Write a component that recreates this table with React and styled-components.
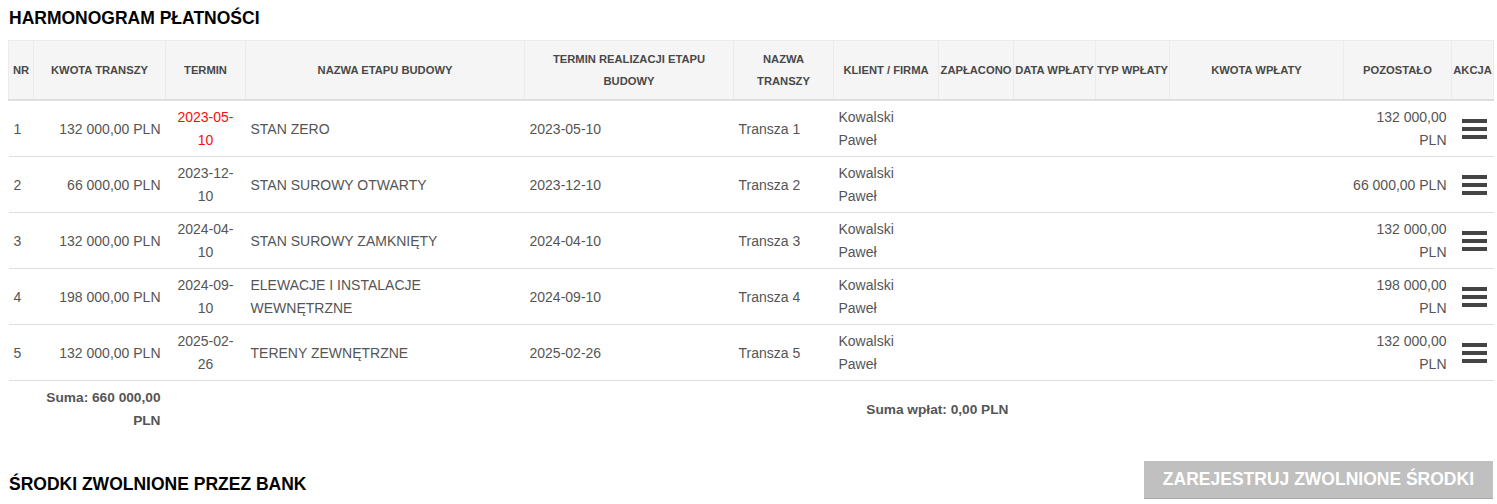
import React from "react";
import styled, { createGlobalStyle } from "styled-components";

const GlobalStyle = createGlobalStyle`
  body {
    margin: 0;
    background: #fff;
    font-family: "Liberation Sans", Arial, sans-serif;
  }
`;

const Page = styled.div`
  width: 1485px;
  padding: 8px 0 0 8px;
`;

const SectionTitle = styled.h2`
  margin: 0;
  font-size: 17.5px;
  line-height: 20px;
  font-weight: bold;
  color: #000;
  text-transform: uppercase;
  padding-left: 1px;
`;

const Schedule = styled.table`
  width: 1485px;
  margin-top: 12px;
  border-collapse: collapse;
  table-layout: fixed;
  font-size: 14px;
  color: #555;

  th {
    background: #f5f5f5;
    border: 1px solid #ebebeb;
    border-bottom: 2px solid #dedede;
    padding: 7px 1px;
    font-size: 11.2px;
    line-height: 22px;
    font-weight: bold;
    color: #484848;
    text-align: center;
    vertical-align: middle;
    white-space: nowrap;
  }

  td {
    border-top: 1px solid #dedede;
    padding: 5px 5px 4px;
    line-height: 23px;
    vertical-align: middle;
  }
`;

const Cell = styled.td`
  text-align: ${(p) => p.$align || "left"};
  color: ${(p) => (p.$late ? "#f41010" : "#555")};
`;

const SumCell = styled.td`
  text-align: right;
  font-size: 13.7px;
  font-weight: bold;
  color: #555;
`;

const MenuButton = styled.span`
  display: inline-block;
  padding-top: 6px;
  padding-left: 5px;
  cursor: pointer;

  svg {
    display: block;
  }
`;

const BankSection = styled.div`
  display: flex;
  justify-content: space-between;
  align-items: flex-end;
  margin-top: 25px;

  h2 {
    margin-bottom: 5px;
  }
`;

const RegisterButton = styled.button`
  height: 38px;
  padding: 0 19px;
  border: none;
  border-bottom: 1px solid #a9a9a9;
  background: #c0c0c0;
  color: #fff;
  font-family: "Liberation Sans", Arial, sans-serif;
  font-size: 17.5px;
  font-weight: bold;
  text-transform: uppercase;
  cursor: not-allowed;
`;

const widths = [25, 132, 80, 279, 209, 100, 105, 75, 82, 74, 174, 108, 42];

const rows = [
  { nr: 1, amount: "132 000,00 PLN", date: "2023-05-10", late: true, stage: "STAN ZERO", left: "132 000,00 PLN" },
  { nr: 2, amount: "66 000,00 PLN", date: "2023-12-10", stage: "STAN SUROWY OTWARTY", left: "66 000,00 PLN" },
  { nr: 3, amount: "132 000,00 PLN", date: "2024-04-10", stage: "STAN SUROWY ZAMKNIĘTY", left: "132 000,00 PLN" },
  { nr: 4, amount: "198 000,00 PLN", date: "2024-09-10", stage: "ELEWACJE I INSTALACJE WEWNĘTRZNE", left: "198 000,00 PLN" },
  { nr: 5, amount: "132 000,00 PLN", date: "2025-02-26", stage: "TERENY ZEWNĘTRZNE", left: "132 000,00 PLN" },
];

const BarsIcon = () => (
  <svg width="25" height="20" viewBox="0 0 25 20">
    <rect x="0" y="0" width="25" height="4" fill="#444" />
    <rect x="0" y="8" width="25" height="4" fill="#444" />
    <rect x="0" y="16" width="25" height="4" fill="#444" />
  </svg>
);

export default function App() {
  return (
    <Page>
      <GlobalStyle />
      <SectionTitle>Harmonogram płatności</SectionTitle>
      <Schedule>
        <colgroup>
          {widths.map((w, i) => (
            <col key={i} style={{ width: w }} />
          ))}
        </colgroup>
        <thead>
          <tr>
            <th>NR</th>
            <th>KWOTA TRANSZY</th>
            <th>TERMIN</th>
            <th>NAZWA ETAPU BUDOWY</th>
            <th>
              TERMIN REALIZACJI ETAPU
              <br />
              BUDOWY
            </th>
            <th>
              NAZWA
              <br />
              TRANSZY
            </th>
            <th>KLIENT / FIRMA</th>
            <th>ZAPŁACONO</th>
            <th>DATA WPŁATY</th>
            <th>TYP WPŁATY</th>
            <th>KWOTA WPŁATY</th>
            <th>POZOSTAŁO</th>
            <th>AKCJA</th>
          </tr>
        </thead>
        <tbody>
          {rows.map((r) => (
            <tr key={r.nr}>
              <Cell>{r.nr}</Cell>
              <Cell $align="right">{r.amount}</Cell>
              <Cell $align="center" $late={r.late}>
                {r.date}
              </Cell>
              <Cell>{r.stage}</Cell>
              <Cell>{r.date}</Cell>
              <Cell>Transza {r.nr}</Cell>
              <Cell>
                Kowalski
                <br />
                Paweł
              </Cell>
              <Cell />
              <Cell />
              <Cell />
              <Cell />
              <Cell $align="right">{r.left}</Cell>
              <Cell>
                <MenuButton>
                  <BarsIcon />
                </MenuButton>
              </Cell>
            </tr>
          ))}
          <tr>
            <Cell />
            <SumCell>Suma: 660 000,00 PLN</SumCell>
            <Cell colSpan={4} />
            <SumCell colSpan={2}>Suma wpłat: 0,00 PLN</SumCell>
            <Cell colSpan={5} />
          </tr>
        </tbody>
      </Schedule>
      <BankSection>
        <SectionTitle>Środki zwolnione przez bank</SectionTitle>
        <RegisterButton>Zarejestruj zwolnione środki</RegisterButton>
      </BankSection>
    </Page>
  );
}
